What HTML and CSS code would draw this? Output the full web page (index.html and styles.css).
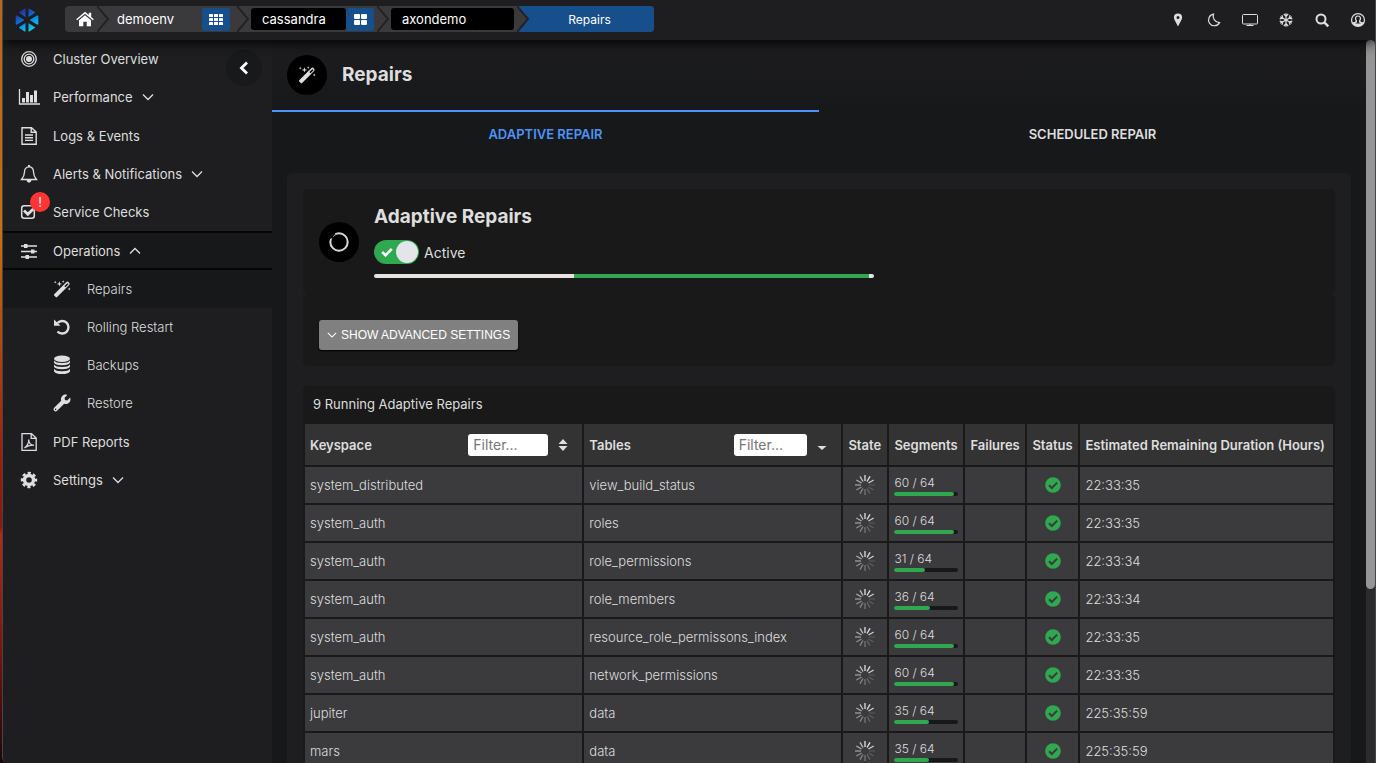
FILE: index.html
```html
<!DOCTYPE html>
<html lang="en">
<head>
    <meta charset="UTF-8">
    <meta name="viewport" content="width=device-width, initial-scale=1.0">
    <title>Repairs</title>
    <link rel="stylesheet" href="styles.css">
</head>
<body>
    <!-- Shared icons -->
    <svg class="sprite" aria-hidden="true">
        <symbol id="wand" viewBox="0 0 18 18">
            <path fill="currentColor" fill-rule="evenodd" d="M1.2 14.2 13.2 2.2q1.200-1.200 2.400 0l.5.5q1.200 1.200 0 2.400L4.100 17.100q-.7.6-1.400 0l-1.500-1.500q-.6-.7 0-1.400zM11.400 6.100l1.100 1.100 2.700-2.700q.3-.4 0-.7l-.4-.4q-.3-.3-.7 0z"/>
            <path fill="currentColor" d="m6.4 1.2.7 2 2 .7-2 .7-.7 2-.7-2-2-.7 2-.7zM2.2.8l.4 1 1 .4-1 .4-.4 1-.4-1-1-.4 1-.4zM10.2.2l.4 1 1 .4-1 .4-.4 1-.4-1-1-.4 1-.4zM16.2 7.6l.4 1 1 .4-1 .4-.4 1-.4-1-1-.4 1-.4z"/>
        </symbol>
        <symbol id="down" viewBox="0 0 12 12">
            <path d="M1 3.5 6 8.5 11 3.5" fill="none" stroke="currentColor" stroke-width="1.3"/>
        </symbol>
        <symbol id="separator" viewBox="0 0 14 26">
            <path d="M0 0 11 13 0 26" fill="none" stroke="#222224" stroke-width="2"/>
        </symbol>
        <symbol id="spinner" viewBox="0 0 20 20">
            <g stroke="#e2e2e2" stroke-width="1.3">
                <path d="M10 0v6"/>
                <path d="M10 0v6" transform="rotate(30 10 10)"/>
                <path d="M10 0v6" transform="rotate(60 10 10)" opacity=".9"/>
                <path d="M10 0v6" transform="rotate(90 10 10)" opacity=".15"/>
                <path d="M10 0v6" transform="rotate(120 10 10)" opacity=".2"/>
                <path d="M10 0v6" transform="rotate(150 10 10)" opacity=".25"/>
                <path d="M10 0v6" transform="rotate(180 10 10)" opacity=".35"/>
                <path d="M10 0v6" transform="rotate(210 10 10)" opacity=".45"/>
                <path d="M10 0v6" transform="rotate(240 10 10)" opacity=".5"/>
                <path d="M10 0v6" transform="rotate(270 10 10)" opacity=".6"/>
                <path d="M10 0v6" transform="rotate(300 10 10)" opacity=".7"/>
                <path d="M10 0v6" transform="rotate(330 10 10)" opacity=".8"/>
            </g>
        </symbol>
        <symbol id="ok" viewBox="0 0 16 16">
            <circle cx="8" cy="8" r="7.8" fill="#2fa84f"/>
            <path d="m4 8.2 2.8 2.8L12.2 5.6" fill="none" stroke="#3b3b3d" stroke-width="2"/>
        </symbol>
    </svg>

    <div class="app">
        <header class="topbar">
            <a class="logo" href="#" aria-label="Home page">
                <svg viewBox="0 0 24 26" width="24" height="26">
                    <defs>
                        <linearGradient id="logoFill" x1="4" y1="2" x2="17" y2="25" gradientUnits="userSpaceOnUse">
                            <stop offset="0" stop-color="#3b1a78"/>
                            <stop offset=".35" stop-color="#0d5fd0"/>
                            <stop offset=".65" stop-color="#0a9bf0"/>
                            <stop offset="1" stop-color="#19d8c6"/>
                        </linearGradient>
                    </defs>
                    <g fill="url(#logoFill)">
                        <path d="M10.500 1.500v8.500L4 5.800q0-.6.400-.9l4.800-3.200q.8-.5 1.300-.2z"/>
                        <path d="M13.500 1.500v8.500L20 5.800q0-.6-.4-.9l-4.800-3.200q-.8-.5-1.300-.2z"/>
                        <path d="M1.600 8.200 9 12.700v.6l-7.400 4.500q-.9-.3-.9-1.200V9.400q0-.9.900-1.200z"/>
                        <path d="M22.400 8.200 15 12.700v.6l7.400 4.500q.9-.3.9-1.200V9.400q0-.9-.9-1.200z"/>
                        <path d="M10.500 24.500V16L4 20.200q0 .6.400.9l4.800 3.200q.8.500 1.300.2z"/>
                        <path d="M13.500 24.500V16l6.500 4.200q0 .6-.4.900l-4.800 3.200q-.8.500-1.300.2z"/>
                    </g>
                </svg>
            </a>

            <nav class="breadcrumb" aria-label="Breadcrumb">
                <a class="crumb-home" href="#" aria-label="Home">
                    <svg viewBox="0 0 18 16" width="18" height="16"><path fill="currentColor" d="M9 .8 12.800 4V1.800h2.400V6L17.800 8.300l-.9 1L9 2.800 1.100 9.300l-.9-1zM9 4.300l6 5V15.200h-4.300V10.800H7.300v4.400H3V9.300z"/></svg>
                </a>
                <svg class="sep"><use href="#separator"/></svg>
                <a class="crumb crumb-env" href="#">demoenv</a>
                <button class="crumb-menu" type="button" aria-label="Environments">
                    <svg viewBox="0 0 14 11" width="14" height="11" fill="currentColor"><rect width="4" height="3" rx=".5"/><rect x="5" width="4" height="3" rx=".5"/><rect x="10" width="4" height="3" rx=".5"/><rect y="4" width="4" height="3" rx=".5"/><rect x="5" y="4" width="4" height="3" rx=".5"/><rect x="10" y="4" width="4" height="3" rx=".5"/><rect y="8" width="4" height="3" rx=".5"/><rect x="5" y="8" width="4" height="3" rx=".5"/><rect x="10" y="8" width="4" height="3" rx=".5"/></svg>
                </button>
                <svg class="sep sep-gap"><use href="#separator"/></svg>
                <a class="crumb crumb-dark" href="#">cassandra</a>
                <button class="crumb-menu crumb-menu-type" type="button" aria-label="Cluster types">
                    <svg viewBox="0 0 13 11" width="13" height="11" fill="currentColor"><rect width="6" height="5" rx="1"/><rect x="7" width="6" height="5" rx="1"/><rect y="6" width="6" height="5" rx="1"/><rect x="7" y="6" width="6" height="5" rx="1"/></svg>
                </button>
                <svg class="sep"><use href="#separator"/></svg>
                <a class="crumb crumb-dark crumb-cluster" href="#">axondemo</a>
                <a class="crumb-current" href="#" aria-current="page">
                    <svg class="sep"><path d="M0 0 12 13 0 26z" fill="#3a3a3d"/><use href="#separator"/></svg>
                    <span>Repairs</span>
                </a>
            </nav>

            <div class="tools">
                <button type="button" aria-label="Location"><svg viewBox="0 0 16 16"><path fill="currentColor" fill-rule="evenodd" d="M8 1.500a4.100 4.100 0 0 1 4.100 4.100C12.100 8.200 9.500 11 8 14.500 6.500 11 3.900 8.200 3.900 5.600A4.100 4.100 0 0 1 8 1.500zm0 2.500a1.500 1.500 0 1 0 0 3 1.500 1.500 0 0 0 0-3z"/></svg></button>
                <button type="button" aria-label="Dark mode"><svg viewBox="0 0 16 16"><path fill="none" stroke="currentColor" stroke-width="1.200" d="M7.500 2.200A5.800 5.800 0 1 0 13.500 10.600 6.300 6.300 0 0 1 7.500 2.200z"/></svg></button>
                <button type="button" aria-label="Display"><svg viewBox="0 0 16 16"><path fill="none" stroke="currentColor" d="M1.500 2.500h13a1 1 0 0 1 1 1v7.500a1 1 0 0 1-1 1h-13a1 1 0 0 1-1-1V3.500a1 1 0 0 1 1-1zM8 12v2M4.500 13.500h7"/></svg></button>
                <button type="button" aria-label="Freeze"><svg viewBox="0 0 16 16"><g fill="none" stroke="currentColor" stroke-width="1.200"><path id="arm" d="M8 1.300v13.400M5.800 2 8 4.300 10.200 2M5.800 14 8 11.700l2.200 2.300"/><use href="#arm" transform="rotate(60 8 8)"/><use href="#arm" transform="rotate(120 8 8)"/></g></svg></button>
                <button type="button" aria-label="Search"><svg viewBox="0 0 16 16"><g fill="none" stroke="currentColor" stroke-width="2"><circle cx="7" cy="7" r="4.500"/><path d="m10.300 10.300 4 4" stroke-width="2.400"/></g></svg></button>
                <button type="button" aria-label="Account"><svg viewBox="0 0 16 16"><path fill="currentColor" fill-rule="evenodd" d="M8 .9a7.100 7.100 0 1 1 0 14.200A7.100 7.100 0 0 1 8 .9zM8 2.200a5.800 5.800 0 0 0-5.300 8.100q2.500-.2 3.100-1.400C4.300 7.500 4.400 3.600 8 3.600s3.700 3.900 2.200 5.300q.6 1.200 3.100 1.400A5.800 5.800 0 0 0 8 2.200zM8 4.600C5.800 4.600 5.700 7.200 7 8.600v1.600q-.5.900-2.300 1.300h6.600Q9.500 11.100 9 10.200V8.600c1.300-1.400 1.200-4-1-4z"/></svg></button>
            </div>
        </header>

        <div class="body">
            <aside class="sidebar">
                <button class="collapse" type="button" aria-label="Collapse menu">
                    <svg viewBox="0 0 12 14" width="12" height="14"><path d="M9 1.500 3.500 7 9 12.500" fill="none" stroke="#fff" stroke-width="2.800"/></svg>
                </button>
                <nav class="menu" aria-label="Main menu">
                    <a href="#">
                        <svg class="icon" viewBox="0 0 18 18"><g fill="none" stroke="currentColor" stroke-width="1.300"><circle cx="9" cy="9" r="7.300"/><circle cx="9" cy="9" r="4.800"/></g><circle cx="9" cy="9" r="3" fill="currentColor"/></svg>
                        Cluster Overview
                    </a>
                    <a class="group-end" href="#">
                        <svg class="icon icon-wide" viewBox="0 0 22 18"><path d="M1.500 1v15H22" fill="none" stroke="currentColor" stroke-width="1.300"/><path fill="currentColor" d="M4 10h3v4.500H4zM8 4h3v10.500H8zM12 7h3v7.500h-3zM16 2.500h3v12h-3z"/></svg>
                        Performance
                        <svg class="arrow"><use href="#down"/></svg>
                    </a>
                    <a href="#">
                        <svg class="icon" viewBox="0 0 18 18"><g fill="none" stroke="currentColor" stroke-width="1.400"><path d="M2 .7h9.500L16.200 5v12.300H2zM11.200.7v4.600h5"/><path d="M5 8h8M5 10.700h8M5 13.400h8"/></g></svg>
                        Logs &amp; Events
                    </a>
                    <a href="#">
                        <svg class="icon" viewBox="0 0 18 18"><path fill="none" stroke="currentColor" stroke-width="1.300" d="M9 1.800c3 0 4.500 2.400 4.500 5.200 0 3.500 1 5 3 7.500h-15c2-2.500 3-4 3-7.500 0-2.800 1.500-5.200 4.500-5.200z"/><path fill="currentColor" d="M8 0h2v2H8zM6.500 15h5q-.5 2.700-2.500 2.700T6.500 15z"/></svg>
                        Alerts &amp; Notifications
                        <svg class="arrow"><use href="#down"/></svg>
                    </a>
                    <a href="#">
                        <span class="icon-box">
                            <svg class="icon" viewBox="0 0 18 18"><rect x="1.700" y="2.700" width="12.600" height="12.600" rx="2.500" fill="none" stroke="currentColor" stroke-width="1.500"/><path d="m4 7.500 3.800 3.800L14 5.200" fill="none" stroke="currentColor" stroke-width="2.800"/></svg>
                            <span class="badge">!</span>
                        </span>
                        Service Checks
                    </a>
                    <a class="open" href="#">
                        <svg class="icon" viewBox="0 0 18 18"><path d="M1 4h16M1 9.500h16M1 15h16" stroke="currentColor" stroke-width="1.500"/><path fill="currentColor" d="M4 2h3.500v4H4zM11 7.500h3.500v4H11zM5.500 13H9v4H5.500z"/></svg>
                        Operations
                        <svg class="arrow arrow-up"><use href="#down"/></svg>
                    </a>
                    <div class="submenu group-end">
                        <a class="active" href="#">
                            <svg class="icon"><use href="#wand"/></svg>
                            Repairs
                        </a>
                        <a href="#">
                            <svg class="icon" viewBox="0 0 18 18"><path d="M4.500 5A6.300 6.300 0 1 1 4.500 13.500" fill="none" stroke="currentColor" stroke-width="2.400"/><path fill="currentColor" d="M1 1.500 7.500 7.800H1z"/></svg>
                            Rolling Restart
                        </a>
                        <a href="#">
                            <svg class="icon icon-tall" viewBox="0 0 18 20"><g fill="currentColor"><ellipse cx="9" cy="3.700" rx="8" ry="3.200"/><path d="M1 5.500q1.500 2.500 8 2.500t8-2.500v2Q16 10.200 9 10.200T1 7.500zM1 9.600q1.500 2.500 8 2.500t8-2.500v2Q16 14.300 9 14.300T1 11.600zM1 13.700q1.500 2.500 8 2.500t8-2.500v2.500Q16 19 9 19T1 16.200z"/></g></svg>
                            Backups
                        </a>
                        <a href="#">
                            <svg class="icon" viewBox="-16 -16 544 544"><path fill="currentColor" d="M507.730 109.100c-2.240-9.030-13.540-12.090-20.120-5.510l-74.360 74.360-67.880-11.310-11.310-67.880 74.360-74.360c6.620-6.620 3.430-17.900-5.660-20.160-47.380-11.740-99.550.91-136.580 37.930-39.640 39.640-50.550 97.100-34.050 147.200L18.740 402.760c-24.990 24.990-24.990 65.510 0 90.500 24.990 24.990 65.510 24.990 90.500 0l213.210-213.210c50.120 16.710 107.470 5.680 147.370-34.220 37.070-37.070 49.700-89.320 37.910-136.730zM64 472c-13.250 0-24-10.750-24-24 0-13.260 10.750-24 24-24s24 10.740 24 24c0 13.250-10.750 24-24 24z"/></svg>
                            Restore
                        </a>
                    </div>
                    <a href="#">
                        <svg class="icon" viewBox="0 0 18 18"><g fill="none" stroke="currentColor" stroke-width="1.300"><path d="M2 .7h9.500L16.200 5v12.300H2zM11.200.7v4.600h5"/><path d="M4.500 14.800c2.500-1.300 4.700-5.500 4.200-8.300 0 3 2 5.500 5.300 5.800-3-.5-6 .2-9.500 2.500z"/></g></svg>
                        PDF Reports
                    </a>
                    <a href="#">
                        <svg class="icon" viewBox="0 0 18 18"><g fill="none" stroke="currentColor"><circle cx="9" cy="9" r="4.500" stroke-width="3.400"/><circle cx="9" cy="9" r="7" stroke-width="2.400" stroke-dasharray="3.100 2.398" stroke-dashoffset="1.550"/></g></svg>
                        Settings
                        <svg class="arrow"><use href="#down"/></svg>
                    </a>
                </nav>
            </aside>

            <main class="content">
                <div class="page-title">
                    <span class="round-icon"><svg width="18" height="18"><use href="#wand"/></svg></span>
                    <h1>Repairs</h1>
                </div>

                <div class="tabs" role="tablist">
                    <button class="tab tab-active" type="button" role="tab" aria-selected="true">ADAPTIVE REPAIR</button>
                    <button class="tab" type="button" role="tab" aria-selected="false">SCHEDULED REPAIR</button>
                </div>

                <div class="panel">
                    <section class="card status-card">
                        <span class="round-icon">
                            <svg viewBox="0 0 20 20" width="20" height="20"><circle cx="10" cy="10" r="8.700" fill="none" stroke="#d8d8d8" stroke-width="2"/><path d="M1 6.500 6 1.500" stroke="#000" stroke-width="1.500"/><circle cx="2.800" cy="5" r="1.200" fill="#000"/></svg>
                        </span>
                        <div class="status">
                            <h2>Adaptive Repairs</h2>
                            <div class="switch">
                                <input type="checkbox" id="active" checked>
                                <svg class="switch-check" viewBox="0 0 12 10" width="12" height="10"><path d="m1.200 5 3.300 3.300L10.800 1.800" fill="none" stroke="#fff" stroke-width="2.600"/></svg>
                                <label for="active">Active</label>
                            </div>
                            <div class="progress"><div class="progress-done"></div></div>
                        </div>
                    </section>
                    <section class="card">
                        <button class="advanced" type="button">
                            <svg width="10" height="10"><use href="#down"/></svg>
                            SHOW ADVANCED SETTINGS
                        </button>
                    </section>

                    <section class="card table-card">
                        <h3>9 Running Adaptive Repairs</h3>
                        <table>
                            <colgroup>
                                <col class="col-keyspace">
                                <col class="col-tables">
                                <col class="col-state">
                                <col class="col-segments">
                                <col class="col-failures">
                                <col class="col-status">
                                <col class="col-duration">
                            </colgroup>
                            <thead>
                                <tr>
                                    <th>
                                        <div class="filter">
                                            <label for="keyspaceFilter">Keyspace</label>
                                            <input type="text" id="keyspaceFilter" placeholder="Filter...">
                                            <svg viewBox="0 0 10 12" width="10" height="12"><path fill="currentColor" d="M5 0l4.500 5H.5zM5 12 .5 7h9z"/></svg>
                                        </div>
                                    </th>
                                    <th>
                                        <div class="filter">
                                            <label for="tableFilter">Tables</label>
                                            <input type="text" id="tableFilter" placeholder="Filter...">
                                            <svg viewBox="0 0 10 12" width="10" height="12"><path fill="currentColor" d="M5 11 .5 7h9z"/></svg>
                                        </div>
                                    </th>
                                    <th>State</th>
                                    <th>Segments</th>
                                    <th>Failures</th>
                                    <th>Status</th>
                                    <th>Estimated Remaining Duration (Hours)</th>
                                </tr>
                            </thead>
                            <tbody id="repairs"></tbody>
                        </table>
                    </section>
                </div>
            </main>

            <div class="scrollbar"><div class="scrollbar-thumb"></div></div>
        </div>
    </div>

    <script>
        const repairs = [
            ['system_distributed', 'view_build_status', 60, 64, '22:33:35'],
            ['system_auth', 'roles', 60, 64, '22:33:35'],
            ['system_auth', 'role_permissions', 31, 64, '22:33:34'],
            ['system_auth', 'role_members', 36, 64, '22:33:34'],
            ['system_auth', 'resource_role_permissons_index', 60, 64, '22:33:35'],
            ['system_auth', 'network_permissions', 60, 64, '22:33:35'],
            ['jupiter', 'data', 35, 64, '225:35:59'],
            ['mars', 'data', 35, 64, '225:35:59']
        ];

        // Build one row per running repair
        document.getElementById('repairs').innerHTML = repairs.map(([keyspace, table, done, total, duration]) => `
            <tr>
                <td>${keyspace}</td>
                <td>${table}</td>
                <td class="center"><svg width="20" height="20"><use href="#spinner"/></svg></td>
                <td>
                    <div class="segments">${done} / ${total}</div>
                    <div class="bar"><div class="bar-fill" style="width: ${done / total * 100}%"></div></div>
                </td>
                <td></td>
                <td class="center"><svg width="16" height="16"><use href="#ok"/></svg></td>
                <td>${duration}</td>
            </tr>`).join('');
    </script>
</body>
</html>
```
FILE: styles.css
```css
* {
    box-sizing: border-box;
}

body {
    margin: 0;
    background: linear-gradient(#b5651d 0%, #c8700f 30%, #a01c0c 60%, #8a160f 69%, #b52a1a 70%, #7a150f 85%, #1c0808 100%);
    color: #dedede;
    font-family: Inter, "Liberation Sans", sans-serif;
    font-size: 13px;
    overflow: hidden;
}

a {
    color: inherit;
    text-decoration: none;
}

button {
    border: none;
    padding: 0;
    background: none;
    color: inherit;
    font: inherit;
    cursor: pointer;
}

h1, h2, h3 {
    margin: 0;
}

svg {
    display: block;
    flex: none;
}

.sprite {
    position: absolute;
    width: 0;
    height: 0;
}

.app {
    display: flex;
    flex-direction: column;
    height: 100vh;
    margin-left: 2px;
    border-left: 1px solid #454547;
    border-right: 1px solid #454547;
    border-bottom-left-radius: 6px;
    background-color: #1e1e20;
    overflow: hidden;
}

/* Top bar */
.topbar {
    display: flex;
    align-items: center;
    height: 40px;
    flex: none;
    padding: 0 9px 0 12px;
    background-color: #1e1e20;
    box-shadow: 0 2px 14px #000;
    z-index: 2;
}

.logo {
    margin-right: 26px;
}

.breadcrumb {
    display: flex;
    align-items: center;
    height: 26px;
    margin-bottom: 2px;
    border-radius: 4px;
    background-color: #3a3a3d;
    color: #fff;
    overflow: hidden;
}

.crumb-home {
    padding: 0 3px 0 11px;
}

.sep {
    width: 14px;
    height: 26px;
}

.sep-gap {
    margin-left: 7px;
}

.crumb {
    height: 22px;
    line-height: 23px;
}

.crumb-env {
    width: 91px;
    padding-left: 6px;
}

.crumb-dark {
    width: 95px;
    padding-left: 11px;
    border-radius: 3px;
    background-color: #000;
}

.crumb-cluster {
    width: 123px;
    margin-right: 3px;
}

.crumb-menu {
    display: flex;
    align-items: center;
    justify-content: center;
    width: 28px;
    height: 23px;
    border-radius: 3px;
    background-color: #174f8c;
}

.crumb-menu-type {
    margin-right: 3px;
}

.crumb-current {
    display: flex;
    width: 137px;
    padding-right: 6px;
    line-height: 27px;
    background-color: #174f8c;
    font-size: 12px;
}

.crumb-current span {
    flex: 1;
    text-align: center;
}

.tools {
    display: flex;
    gap: 20px;
    margin-left: auto;
}

.tools svg {
    width: 16px;
    height: 16px;
}

.body {
    display: flex;
    flex: 1;
    min-height: 0;
}

/* Sidebar */
.sidebar {
    position: relative;
    flex: none;
    width: 269px;
    background-color: #1e1e20;
}

.collapse {
    position: absolute;
    top: 10px;
    right: 10px;
    display: flex;
    align-items: center;
    justify-content: center;
    width: 36px;
    height: 36px;
    border-radius: 50%;
    background-color: #18191b;
}

.menu a {
    display: flex;
    align-items: center;
    gap: 14px;
    height: 38px;
    padding-left: 16px;
}

.menu .group-end {
    margin-bottom: 1px;
}

.icon {
    width: 18px;
    height: 18px;
}

.menu .icon,
.icon-box {
    margin: 0 1px;
}

.menu .icon-wide {
    width: 22px;
    margin: 0 -1px;
}

.menu .icon-tall {
    height: 20px;
}

.icon-box {
    position: relative;
}

.menu .icon-box .icon {
    margin: 0;
}

.badge {
    position: absolute;
    left: 10px;
    top: -11px;
    width: 20px;
    height: 20px;
    border-radius: 50%;
    background-color: #fd3535;
    color: #fff;
    line-height: 20px;
    text-align: center;
}

.arrow {
    width: 12px;
    height: 12px;
    margin-left: -5px;
}

.arrow-up {
    transform: rotate(180deg);
}

.menu .open {
    height: 39px;
    border-top: 2px solid #060606;
    border-bottom: 2px solid #060606;
    background-color: #17181a;
}

.submenu a {
    padding-left: 49px;
    gap: 15px;
    font-weight: 300;
}

.submenu .active {
    background-color: #17181a;
}

/* Main area */
.content {
    flex: 1;
    min-width: 0;
    background-color: #17181a;
    overflow: hidden;
}

.page-title {
    display: flex;
    align-items: center;
    gap: 15px;
    height: 70px;
    padding: 0 15px;
    background: linear-gradient(#1d1d1f, #17181a);
}

.round-icon {
    display: flex;
    align-items: center;
    justify-content: center;
    flex: none;
    width: 40px;
    height: 40px;
    border-radius: 50%;
    background-color: #000;
}

h1, h2 {
    font-size: 19px;
    font-weight: 700;
    line-height: 24px;
}

.tabs {
    display: flex;
}

.tab {
    flex: 1;
    height: 46px;
    border-top: 2px solid transparent;
    font-weight: 600;
}

.tab-active {
    border-color: #4b93f7;
    color: #4b93f7;
}

.panel {
    margin: 17px 15px 0;
    padding: 16px;
    border-radius: 5px;
    background-color: #1e1e20;
}

.card {
    padding: 26px 16px 16px;
    border-radius: 5px;
    background-color: #191919;
}

.status-card {
    display: flex;
    align-items: center;
    gap: 15px;
    padding: 16px;
}

.status {
    flex: 1;
}

.switch {
    position: relative;
    display: flex;
    align-items: center;
    gap: 5px;
    margin-top: 11px;
    font-size: 14px;
}

.switch input {
    appearance: none;
    display: flex;
    justify-content: flex-end;
    width: 45px;
    height: 24px;
    margin: 0;
    padding: 1px;
    border-radius: 12px;
    background-color: #2fa84f;
}

.switch input::after {
    content: "";
    width: 22px;
    height: 22px;
    border-radius: 50%;
    background-color: #e3e5ea;
}

.switch-check {
    position: absolute;
    left: 7px;
    top: 7px;
}

.progress {
    max-width: 500px;
    height: 4px;
    margin-top: 10px;
    border-radius: 2px;
    background-color: #e6e2df;
}

.progress-done {
    width: 59%;
    height: 100%;
    margin-left: 40%;
    background-color: #2fa84f;
}

.advanced {
    display: flex;
    align-items: center;
    gap: 4px;
    height: 30px;
    padding: 0 8px;
    border-radius: 3px;
    background-color: #808080;
    box-shadow: 0 1px 2px #000;
    color: #fff;
    font-family: "Liberation Sans", Arial, sans-serif;
    font-size: 12px;
}

/* Repairs table */
.table-card {
    margin-top: 20px;
    padding: 0;
}

h3 {
    padding-left: 10px;
    font-size: 13px;
    font-weight: 400;
    line-height: 36px;
}

table {
    width: 100%;
    table-layout: fixed;
    border-collapse: separate;
    border-spacing: 2px;
}

.col-keyspace {
    width: 27.3%;
}

.col-tables {
    width: 25.3%;
}

.col-state {
    width: 44px;
}

.col-segments {
    width: 74px;
}

.col-failures {
    width: 60px;
}

.col-status {
    width: 51px;
}

th {
    height: 41px;
    padding: 0 5px;
    background-color: #333;
    font-weight: 600;
    text-align: left;
    white-space: nowrap;
}

td {
    height: 36px;
    padding: 0 5px;
    background-color: #3b3b3d;
    font-weight: 300;
}

.center svg {
    margin: 0 auto;
}

.filter {
    display: flex;
    align-items: center;
    gap: 10px;
    padding-right: 9px;
}

.filter input {
    width: 31%;
    height: 22px;
    margin-left: auto;
    padding: 0 5px;
    border: none;
    border-radius: 3px;
    background-color: #fff;
    color: #333;
    font: inherit;
    font-size: 14px;
    font-weight: 400;
}

.filter input::placeholder {
    color: #757575;
}

.segments {
    font-size: 12px;
    line-height: 16px;
}

.bar {
    height: 4px;
    margin-top: 1px;
    border-radius: 2px;
    background-color: #17181a;
}

.bar-fill {
    height: 100%;
    border-radius: 2px;
    background-color: #2fa84f;
}

.scrollbar {
    flex: none;
    width: 9px;
    background-color: #2b2b2d;
}

.scrollbar-thumb {
    height: 76%;
    border-radius: 5px;
    background-color: #959595;
}
```
